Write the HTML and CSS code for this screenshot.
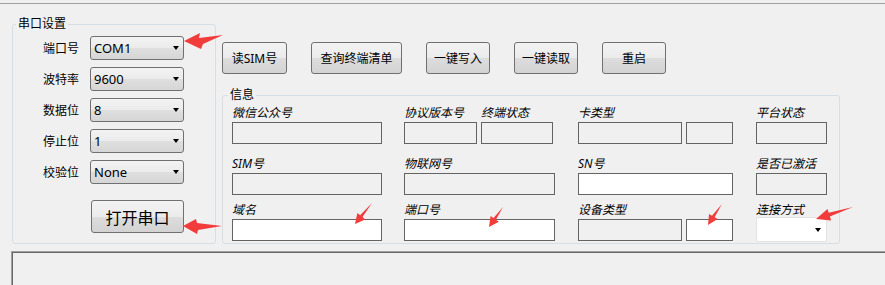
FILE: index.html
```html
<!DOCTYPE html>
<html lang="zh-CN">
<head>
<meta charset="UTF-8">
<title>串口工具</title>
<link rel="stylesheet" href="styles.css">
</head>
<body>
<div class="topline"></div>
<div class="main">
    <fieldset class="group serial">
        <legend>串口设置</legend>
        <div class="serial-body">
            <div class="field-row"><span class="lbl">端口号</span><div class="combo"><span>COM1</span><i class="caret"></i></div></div>
            <div class="field-row"><span class="lbl">波特率</span><div class="combo"><span>9600</span><i class="caret"></i></div></div>
            <div class="field-row"><span class="lbl">数据位</span><div class="combo"><span>8</span><i class="caret"></i></div></div>
            <div class="field-row"><span class="lbl">停止位</span><div class="combo"><span>1</span><i class="caret"></i></div></div>
            <div class="field-row"><span class="lbl">校验位</span><div class="combo"><span>None</span><i class="caret"></i></div></div>
            <button class="btn btn-open">打开串口</button>
        </div>
    </fieldset>

    <div class="right">
        <div class="toolbar">
            <button class="btn b65">读SIM号</button>
            <button class="btn b91">查询终端清单</button>
            <button class="btn b64">一键写入</button>
            <button class="btn b64">一键读取</button>
            <button class="btn b64">重启</button>
        </div>

        <fieldset class="group info">
            <legend>信息</legend>
            <div class="info-body">
                <!-- 第一行 -->
                <div class="info-row">
                    <div class="cell w150"><div class="cap">微信公众号</div><div class="box"></div></div>
                    <div class="cell w73"><div class="cap">协议版本号</div><div class="box"></div></div>
                    <div class="cell w75 sub"><div class="cap">终端状态</div><div class="box bw72"></div></div>
                    <div class="cell w104"><div class="cap">卡类型</div><div class="box"></div></div>
                    <div class="cell w48 sub"><div class="cap">&nbsp;</div><div class="box bw47"></div></div>
                    <div class="cell w71"><div class="cap">平台状态</div><div class="box"></div></div>
                </div>
                <!-- 第二行 -->
                <div class="info-row r2">
                    <div class="cell w150"><div class="cap">SIM号</div><div class="box"></div></div>
                    <div class="cell w152"><div class="cap">物联网号</div><div class="box bw151"></div></div>
                    <div class="cell w156"><div class="cap">SN号</div><div class="box white bw155"></div></div>
                    <div class="cell w71"><div class="cap">是否已激活</div><div class="box"></div></div>
                </div>
                <!-- 第三行 -->
                <div class="info-row r3">
                    <div class="cell w150"><div class="cap">域名</div><div class="box white"></div></div>
                    <div class="cell w152"><div class="cap">端口号</div><div class="box white bw151"></div></div>
                    <div class="cell w104"><div class="cap">设备类型</div><div class="box"></div></div>
                    <div class="cell w48 sub"><div class="cap">&nbsp;</div><div class="box white bw47"></div></div>
                    <div class="cell w71"><div class="cap">连接方式</div><div class="combo-flat"><i class="caret"></i></div></div>
                </div>
            </div>
        </fieldset>
    </div>
</div>

<div class="log"></div>

<!-- 红色标注箭头 -->
<svg class="marks" width="885" height="285" viewBox="0 0 885 285">
    <polygon points="184,41 200,33 199,38 223,35 203,44 201,49"/>
    <polygon points="183,226 196,219 197,223 222,226 198,230 197,234"/>
    <polygon points="355,224 357.4,213.1 360.1,215.3 372,203 362.5,217.1 365.2,219.4"/>
    <polygon points="489,227 490.6,215.9 493.5,217.9 503,207 495.9,219.7 498.8,221.7"/>
    <polygon points="708,225 709,213.9 712,215.7 722,204 714.6,217.3 717.6,219.1"/>
    <polygon points="816,219 827.5,209 828.7,212.8 853,207 829.9,216.6 831.1,220.4"/>
</svg>
</body>
</html>
```

FILE: styles.css
```css
body {
    margin: 0;
    width: 885px;
    height: 285px;
    overflow: hidden;
    position: relative;
    background-color: #f0f0f0;
    font-family: "Noto Sans", "Noto Sans CJK SC", sans-serif;
    font-size: 12px;
    color: #000;
}
.topline {
    height: 3px;
    border-bottom: 1px solid #a0a0a0;
}
.main {
    display: flex;
    align-items: flex-start;
    padding-left: 12px;
}

/* 分组框 */
.group {
    box-sizing: border-box;
    margin: 0;
    padding: 0;
    border: 1px solid #d5dfe5;
    border-radius: 3px;
    min-width: 0;
}
.group legend {
    padding: 0 2px;
    line-height: 14px;
    font-size: 12px;
}
.serial {
    width: 204px;
    margin-top: 13px;
}
.serial legend {
    margin-left: 3px;
}
.serial-body {
    display: flex;
    flex-direction: column;
    gap: 7px;
    padding: 5px 0 10px 30px;
}
.field-row {
    display: flex;
    align-items: center;
    gap: 11px;
    height: 24px;
}
.lbl {
    width: 36px;
    white-space: nowrap;
}
.combo {
    box-sizing: border-box;
    width: 94px;
    height: 24px;
    display: flex;
    align-items: center;
    justify-content: space-between;
    padding: 0 4px 0 3px;
    border: 1px solid #707070;
    border-radius: 3px;
    background: linear-gradient(#f3f3f3, #ebebeb 50%, #dfdfdf 51%, #d6d6d6);
    font-size: 13px;
}
.caret {
    width: 0;
    height: 0;
    border-left: 3px solid transparent;
    border-right: 3px solid transparent;
    border-top: 4px solid #000;
}

/* 按钮 */
.btn {
    box-sizing: border-box;
    height: 32px;
    padding: 0;
    border: 1px solid #707070;
    border-radius: 3px;
    background: linear-gradient(#f3f3f3, #ebebeb 50%, #dddddd 51%, #d3d3d3);
    font-family: inherit;
    font-size: 12px;
    color: #000;
}
.btn-open {
    width: 93px;
    height: 33px;
    margin: 9px 0 0 48px;
    font-size: 16px;
}
.b65 { width: 65px; }
.b91 { width: 91px; }
.b64 { width: 64px; }

.right {
    margin-left: 6px;
    margin-top: 38px;
}
.toolbar {
    display: flex;
    gap: 24px;
}
.info {
    width: 618px;
    margin-top: 14px;
}
.info legend {
    margin-left: 5px;
}
.info-body {
    padding: 4px 0 1px 9px;
}
.info-row {
    display: flex;
}
.info-row.r2 { margin-top: 13px; }
.info-row.r3 { margin-top: 8px; }

.cell {
    display: flex;
    flex-direction: column;
}
.cell + .cell { margin-left: 22px; }
.cell.sub { margin-left: 4px; }
.w150 { width: 150px; }
.w73 { width: 73px; }
.w75 { width: 75px; }
.w104 { width: 104px; }
.w48 { width: 48px; }
.w71 { width: 71px; }
.w152 { width: 152px; }
.w156 { width: 156px; }

.cap {
    height: 14px;
    line-height: 14px;
    font-style: italic;
    white-space: nowrap;
}
.box {
    box-sizing: border-box;
    height: 22px;
    margin-top: 2px;
    border: 1px solid #646464;
    background-color: #f0f0f0;
}
.box.white { background-color: #fff; }
.bw72 { width: 72px; }
.bw47 { width: 47px; }
.bw151 { width: 151px; }
.bw155 { width: 155px; }

.combo-flat {
    box-sizing: border-box;
    height: 25px;
    display: flex;
    align-items: center;
    justify-content: flex-end;
    padding-right: 5px;
    border: 1px solid #e3e3e3;
    border-radius: 2px;
    background-color: #fff;
}

/* 日志区 */
.log {
    margin: 7px 0 0 11px;
    width: 900px;
    height: 40px;
    border-top: 1px solid #a0a0a0;
    border-left: 1px solid #a0a0a0;
    box-shadow: inset 1px 1px 0 #696969;
}

.marks {
    position: absolute;
    left: 0;
    top: 0;
    pointer-events: none;
}
.marks polygon {
    fill: #f23b3b;
}
```
